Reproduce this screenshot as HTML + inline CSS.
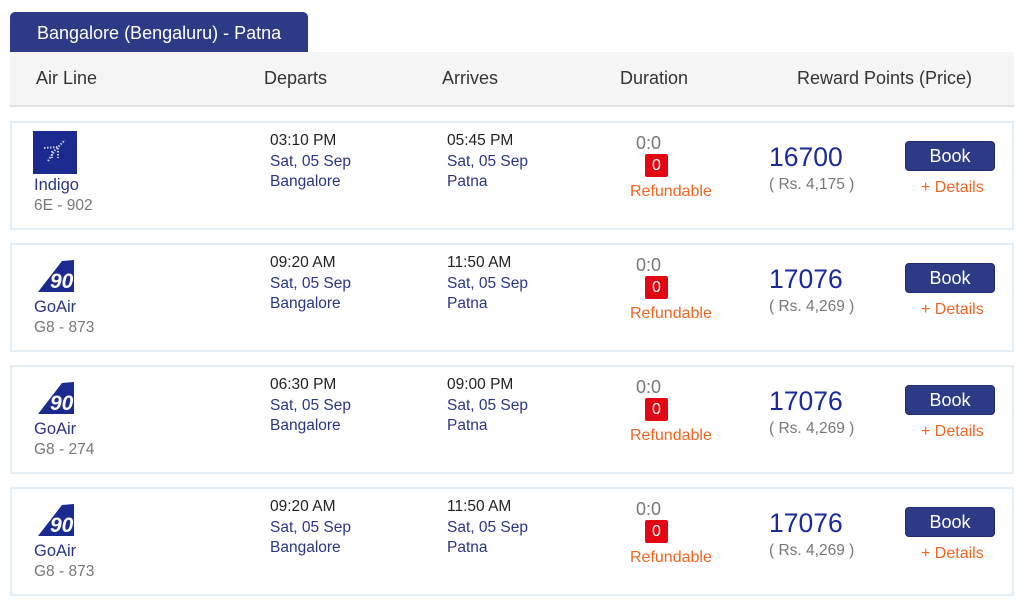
<!DOCTYPE html>
<html><head><style>
*{margin:0;padding:0;box-sizing:border-box}
body{width:1024px;height:607px;background:#fff;font-family:"Liberation Sans",sans-serif;position:relative;overflow:hidden}
.a{position:absolute;white-space:nowrap;line-height:1}
.tab{position:absolute;left:10px;top:12px;width:298px;height:41px;background:#2d3a85;border-radius:5px 5px 0 0;color:#fff;font-size:18px;padding:11px 0 0 27px}
.hdr{position:absolute;left:10px;top:52px;width:1004px;height:55px;background:#f5f5f5;border-bottom:2px solid #e2e2e2}
.hdr span{position:absolute;top:16px;font-size:18px;color:#333}
.card{position:absolute;left:10px;width:1004px;height:109px;border:2px solid #e3edf6;background:#fff}
.dk{color:#222;font-size:15.5px}
.bl{color:#2a3584;font-size:15.5px}
.gr{color:#777;font-size:15.5px}
.red{position:absolute;width:23px;height:23px;background:#e30613;border-radius:2px;color:#fff;font-size:16px;text-align:center;line-height:23px}
.or{color:#f26522;font-size:16px}
.pr{color:#1a2a9a;font-size:26.5px}
.bk{position:absolute;width:90px;height:30px;background:#2d3a85;border:1px solid #1e2a6e;border-radius:4px;color:#fff;font-size:18px;text-align:center;line-height:28px}
</style></head><body>
<div class="tab">Bangalore (Bengaluru) - Patna</div>
<div class="hdr"><span style="left:26px">Air Line</span><span style="left:254px">Departs</span><span style="left:432px">Arrives</span><span style="left:610px">Duration</span><span style="left:787px">Reward Points (Price)</span></div>

<div class="card" style="top:121px"></div>
<div class="card" style="top:243px"></div>
<div class="card" style="top:365px"></div>
<div class="card" style="top:487px"></div>

<div class="a" style="left:33px;top:131px;width:44px;height:43px;background:#1b2a8f"><svg width="44" height="43"><g fill="none" stroke="#c9cde8" stroke-width="2" stroke-dasharray="1.5 1.5"><path d="M15 30 L22 19 L32 9"/><path d="M11 17 L25 16 L25 27"/><path d="M19 20 L19 27"/></g></svg></div>

<div class="a bl" style="left:34px;top:177px;font-size:16.5px">Indigo</div>
<div class="a gr" style="left:34px;top:198px">6E - 902</div>

<div class="a dk" style="left:270px;top:133px">03:10 PM</div>
<div class="a bl" style="left:270px;top:154px">Sat, 05 Sep</div>
<div class="a bl" style="left:270px;top:174px">Bangalore</div>
<div class="a dk" style="left:447px;top:133px">05:45 PM</div>
<div class="a bl" style="left:447px;top:154px">Sat, 05 Sep</div>
<div class="a bl" style="left:447px;top:174px">Patna</div>
<div class="a gr" style="left:636px;top:134px;font-size:18px">0:0</div>
<div class="red" style="left:645px;top:154px">0</div>
<div class="a or" style="left:630px;top:184px">Refundable</div>
<div class="a pr" style="left:769px;top:144px">16700</div>
<div class="a gr" style="left:769px;top:177px">( Rs. 4,175 )</div>
<div class="bk" style="left:905px;top:141px">Book</div>
<div class="a or" style="left:921px;top:180px">+ Details</div>

<div id="g"></div>
<script>
var d=[[243,"09:20 AM","11:50 AM","G8 - 873"],[365,"06:30 PM","09:00 PM","G8 - 274"],[487,"09:20 AM","11:50 AM","G8 - 873"]];
var h="";d.forEach(function(r){var o=r[0]-121;function t(y){return "top:"+(y+o)+"px"}
h+='<div class="a" style="left:36px;'+t(137)+'"><svg width="40" height="34"><path d="M2 33 L26 2 L38 1 L38 33 Z" fill="#1b2a8f"/><text x="14" y="29" font-family="Liberation Sans Narrow, Liberation Sans" font-weight="bold" font-style="italic" font-size="21" fill="#fff" transform="scale(1,1)">90</text></svg></div>'+
'<div class="a bl" style="left:34px;'+t(177)+';font-size:16.5px">GoAir</div><div class="a gr" style="left:34px;'+t(198)+'">'+r[3]+'</div>'+
'<div class="a dk" style="left:270px;'+t(133)+'">'+r[1]+'</div><div class="a bl" style="left:270px;'+t(154)+'">Sat, 05 Sep</div><div class="a bl" style="left:270px;'+t(174)+'">Bangalore</div>'+
'<div class="a dk" style="left:447px;'+t(133)+'">'+r[2]+'</div><div class="a bl" style="left:447px;'+t(154)+'">Sat, 05 Sep</div><div class="a bl" style="left:447px;'+t(174)+'">Patna</div>'+
'<div class="a gr" style="left:636px;'+t(134)+';font-size:18px">0:0</div><div class="red" style="left:645px;'+t(154)+'">0</div><div class="a or" style="left:630px;'+t(184)+'">Refundable</div>'+
'<div class="a pr" style="left:769px;'+t(144)+'">17076</div><div class="a gr" style="left:769px;'+t(177)+'">( Rs. 4,269 )</div>'+
'<div class="bk" style="left:905px;'+t(141)+'">Book</div><div class="a or" style="left:921px;'+t(180)+'">+ Details</div>';});
document.getElementById("g").innerHTML=h;
</script>
</body></html>
